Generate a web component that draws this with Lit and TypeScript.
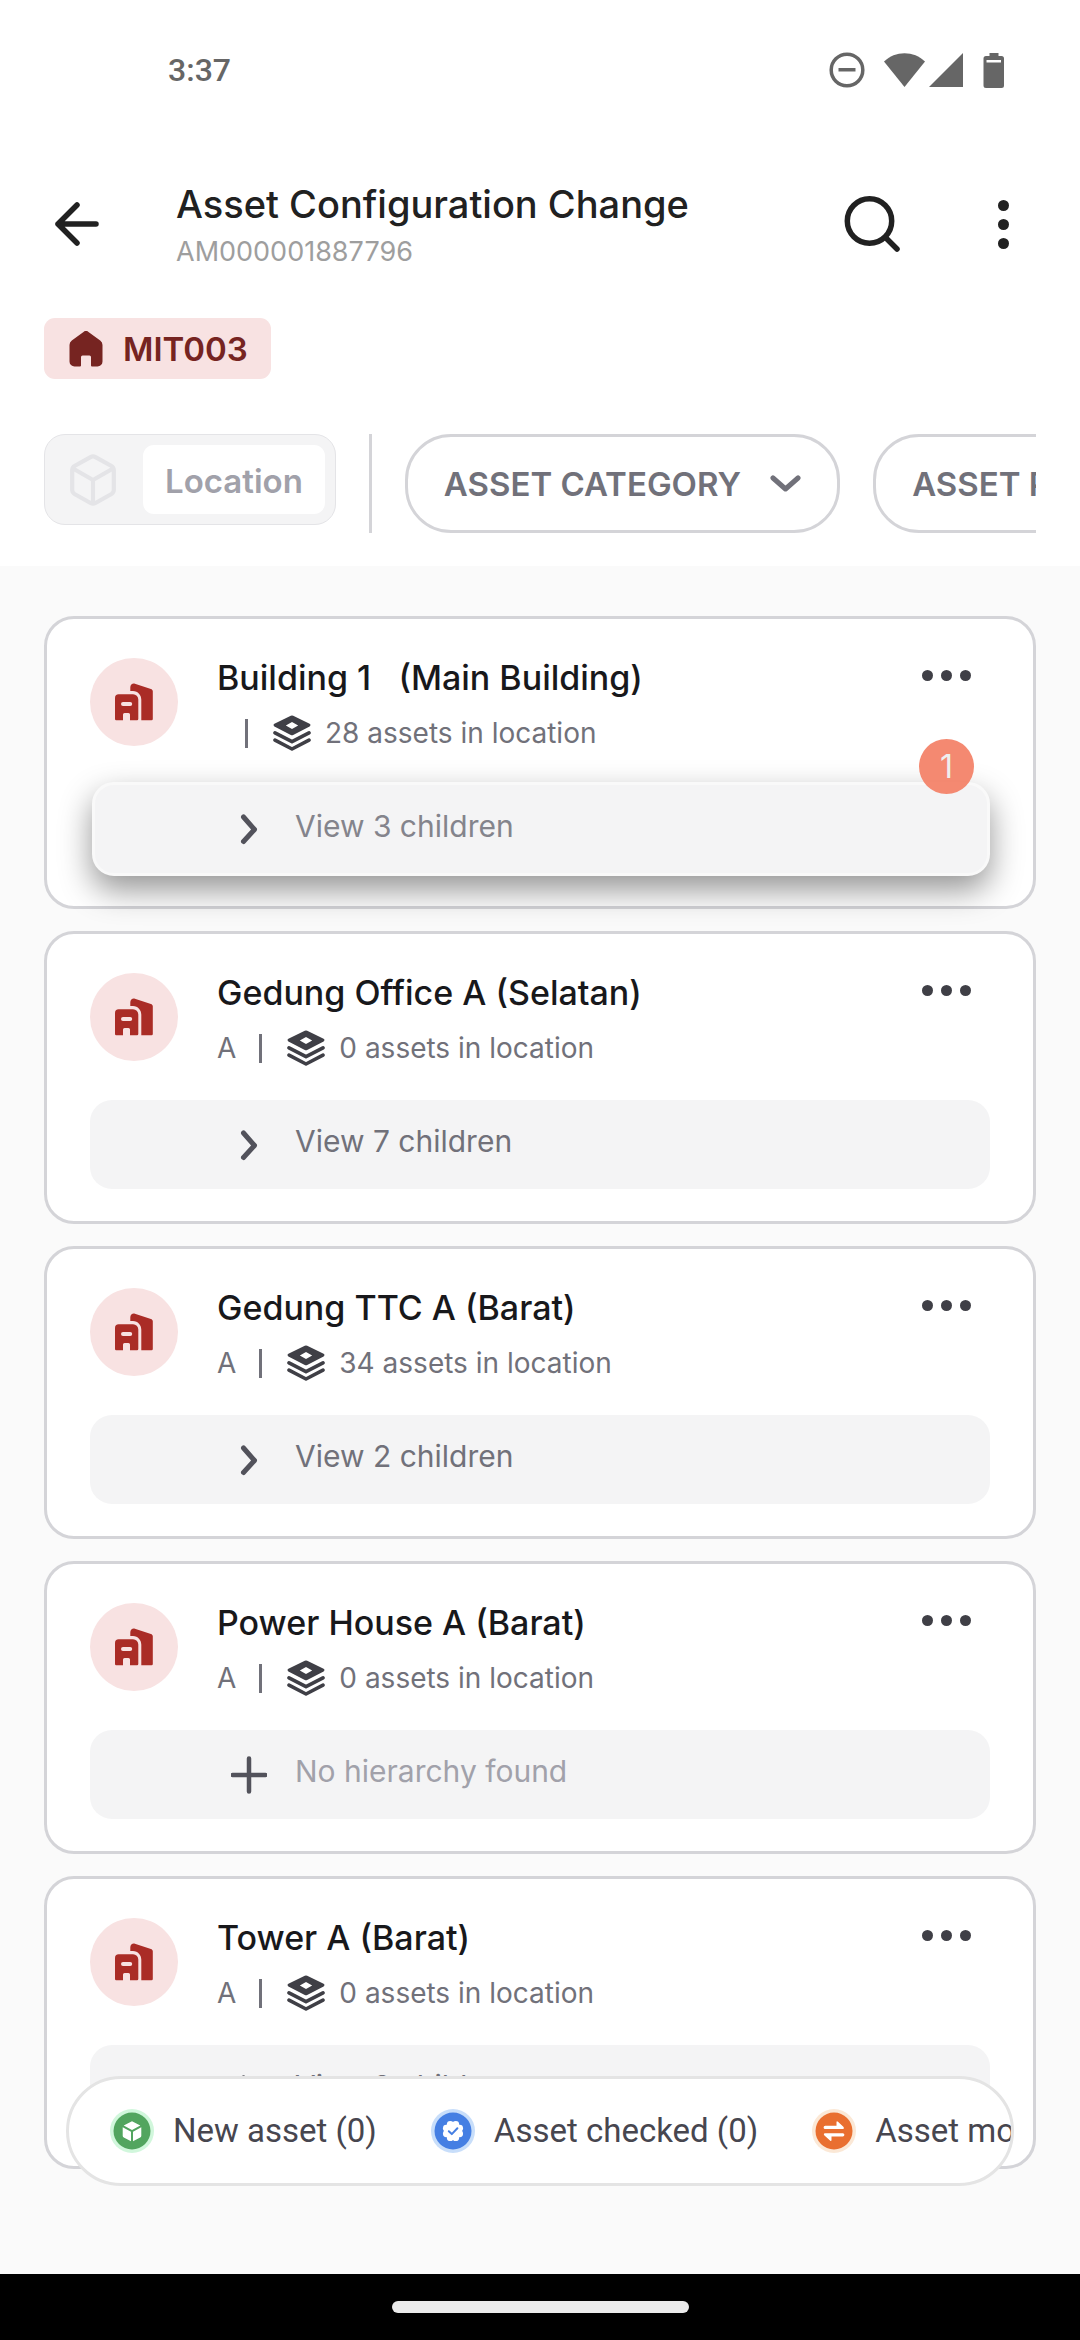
import { LitElement, html, css, svg, nothing } from "lit";
import { customElement, property } from "lit/decorators.js";
import { classMap } from "lit/directives/class-map.js";

interface AssetLocation {
  name: string;
  code: string;
  assets: number;
  children: number;
  step?: number;
}

const LOCATIONS: AssetLocation[] = [
  { name: "Building 1   (Main Building)", code: "", assets: 28, children: 3, step: 1 },
  { name: "Gedung Office A (Selatan)", code: "A", assets: 0, children: 7 },
  { name: "Gedung TTC A (Barat)", code: "A", assets: 34, children: 2 },
  { name: "Power House A (Barat)", code: "A", assets: 0, children: 0 },
  { name: "Tower A (Barat)", code: "A", assets: 0, children: 2 },
];

const chevronDown = html`<svg width="31" height="17" viewBox="0 0 31 17" fill="none" stroke="currentColor" stroke-width="5" stroke-linecap="round" stroke-linejoin="round" aria-hidden="true"><path d="M3 3 15.500 14 28 3" /></svg>`;

const chevronRight = html`<svg width="36" height="38" viewBox="0 0 36 38" fill="none" stroke="#52525b" stroke-width="5" stroke-linecap="round" stroke-linejoin="round" aria-hidden="true"><path d="M12.500 7 23.500 19.500 12.500 31.500" /></svg>`;

const plus = html`<svg width="36" height="38" viewBox="0 0 36 38" fill="none" stroke="#52525b" stroke-width="4.500" stroke-linecap="round" aria-hidden="true"><path d="M18 2.500v33M1.500 19h33" /></svg>`;

const layers = html`<svg width="38" height="36" viewBox="0 0 38 36" aria-hidden="true">
  <path fill="#3f3f46" fill-rule="evenodd" d="M17.800.8a2.500 2.500 0 0 1 2.400 0l16.400 7.900a1.500 1.500 0 0 1 0 2.700l-16.400 8.600a2.500 2.500 0 0 1-2.400 0L1.400 11.400a1.500 1.500 0 0 1 0-2.700zM19 7l-6.200 3.500L19 14l6.200-3.500z" />
  <path fill="none" stroke="#3f3f46" stroke-width="3.600" stroke-linecap="round" stroke-linejoin="round" d="M2 17.800l17 8.800 17-8.800M2 25.200l17 8.800 17-8.800" />
</svg>`;

const building = html`<svg width="42" height="42" viewBox="0 0 42 42" fill="#aa2c26" aria-hidden="true">
  <path fill-rule="evenodd" d="M2 17a3.700 3.700 0 0 1 3.700-3.700H20a5.300 5.300 0 0 1 5.300 5.300v19.400a1.300 1.300 0 0 1-1.300 1.300h-7V33.500a1.500 1.500 0 0 0-1.500-1.500h-4A1.500 1.500 0 0 0 10 33.500v5.800H3.300A1.300 1.300 0 0 1 2 38zM10 21a2 2 0 0 0 0 4h7.200a2 2 0 0 0 0-4z" />
  <path d="M17.300 10V6.500c0-2.700 2.300-4.500 4.600-3.700l16 5.100c1.100.4 1.900 1.200 1.900 2.300V38a1.300 1.300 0 0 1-1.300 1.300H28.300V18.800c0-5-3.300-8.500-8.300-8.800z" />
</svg>`;

@customElement("location-card")
export class LocationCard extends LitElement {
  @property({ attribute: false }) location!: AssetLocation;

  static styles = css`
    :host {
      display: block;
      isolation: isolate;
    }
    .card {
      box-sizing: border-box;
      padding: 39px 43px 32px;
      border: 3px solid #d4d4d8;
      border-radius: 30px;
      background: #fff;
    }
    .head {
      display: flex;
      align-items: flex-start;
      gap: 39px;
      margin-bottom: 34px;
    }
    .avatar {
      display: grid;
      place-items: center;
      width: 88px;
      height: 88px;
      border-radius: 50%;
      background: #f8e2e2;
    }
    .info {
      flex: 1;
      min-width: 0;
    }
    .name {
      margin: 0 0 17px;
      font-size: 34px;
      line-height: 40px;
      font-weight: 500;
      color: #18181b;
      white-space: pre;
    }
    .meta {
      display: flex;
      align-items: center;
      height: 36px;
      font-size: 28px;
      line-height: 36px;
      color: #71717a;
    }
    .code {
      min-width: 5px;
      margin-right: 23px;
    }
    .rule {
      width: 3px;
      height: 29px;
      margin-right: 25px;
      background: #71717a;
    }
    .count {
      margin-left: 14px;
    }
    button {
      border: 0;
      background: none;
      padding: 0;
      font: inherit;
      color: inherit;
      cursor: pointer;
    }
    .more {
      display: flex;
      gap: 8px;
      padding: 12px 19px;
    }
    .dot {
      width: 11px;
      height: 11px;
      border-radius: 50%;
      background: #3f3f46;
    }
    .footer {
      position: relative;
    }
    .children {
      box-sizing: border-box;
      display: flex;
      align-items: center;
      gap: 28px;
      width: 100%;
      height: 89px;
      padding-left: 141px;
      border-radius: 22px;
      background: #f4f4f5;
      font-size: 30px;
      line-height: 38px;
      color: #71717a;
    }
    .label {
      padding-bottom: 7px;
    }
    .empty .label {
      color: #a1a1aa;
    }
    .raised {
      width: calc(100% - 2px);
      height: 94px;
      margin: -3px 0 -2px 2px;
      padding-left: 136px;
      border: 3px solid #f9f9f9;
      box-shadow: 0 14px 32px rgba(0, 0, 0, 0.42);
      color: #84848c;
    }
    .badge {
      position: absolute;
      top: -43px;
      right: 16px;
      display: grid;
      place-items: center;
      width: 55px;
      height: 55px;
      border-radius: 50%;
      background: rgba(243, 130, 104, 0.94);
      color: #eee;
      font-size: 32px;
      line-height: 55px;
    }
  `;

  render() {
    const { name, code, assets, children, step } = this.location;
    const empty = children === 0;
    return html`
      <article class="card">
        <div class="head">
          <div class="avatar">${building}</div>
          <div class="info">
            <h2 class="name">${name}</h2>
            <div class="meta">
              <span class="code">${code}</span>
              <span class="rule"></span>
              ${layers}
              <span class="count">${assets} assets in location</span>
            </div>
          </div>
          <button class="more" aria-label="More actions">
            <span class="dot"></span><span class="dot"></span><span class="dot"></span>
          </button>
        </div>
        <div class="footer">
          <button class=${classMap({ children: true, empty, raised: step !== undefined })}>
            ${empty ? plus : chevronRight}
            <span class="label">${empty ? "No hierarchy found" : `View ${children} children`}</span>
          </button>
          ${step !== undefined ? html`<span class="badge">${step}</span>` : nothing}
        </div>
      </article>
    `;
  }
}

/* Eight-lobed seal used by the "checked" marker. */
const lobes = Array.from({ length: 8 }, (_, i) => {
  const a = (i * Math.PI) / 4 + Math.PI / 8;
  return svg`<circle cx=${22 + 7.2 * Math.cos(a)} cy=${22 + 7.2 * Math.sin(a)} r="3.400" fill="#fff" />`;
});

const newIcon = html`<svg width="44" height="44" viewBox="0 0 44 44" aria-hidden="true">
  <circle cx="22" cy="22" r="22" fill="#d1f7dc" />
  <circle cx="22" cy="22" r="18.500" fill="#52a55f" />
  <path fill="#fff" d="M22 12.200l8.300 4.300L22 21l-8.300-4.500zM12.700 18.300l8.300 4.500v9.500l-7.200-3.700a2 2 0 0 1-1.100-1.800zM31.300 18.300v8.500a2 2 0 0 1-1.100 1.800L23 32.300v-9.500z" />
</svg>`;

const checkedIcon = html`<svg width="44" height="44" viewBox="0 0 44 44" aria-hidden="true">
  <circle cx="22" cy="22" r="22" fill="#c8defa" />
  <circle cx="22" cy="22" r="18.500" fill="#457fe3" />
  ${lobes}
  <circle cx="22" cy="22" r="8.500" fill="#fff" />
  <path d="M17.800 22.300l3 2.800 5.600-5.800" fill="none" stroke="#457fe3" stroke-width="2" stroke-linecap="round" stroke-linejoin="round" />
</svg>`;

const movedIcon = html`<svg width="44" height="44" viewBox="0 0 44 44" aria-hidden="true">
  <circle cx="22" cy="22" r="22" fill="#fbe8d6" />
  <circle cx="22" cy="22" r="18.500" fill="#e96f30" />
  <path d="M13.200 16.800h11.300v-3.300q0-2 1.500-.7l5.600 5.200q1 2-.6 2H13.200a1.600 1.600 0 0 1 0-3.200zM30.800 24.200a1.600 1.600 0 0 1 0 3.200H19.500v3.300q0 2-1.500.7l-5.800-5.200q-1-2 .8-2z" fill="#fff" />
</svg>`;

@customElement("app-root")
export class AppRoot extends LitElement {
  static styles = css`
    :host {
      display: block;
      font-family: Inter, "Liberation Sans", sans-serif;
    }
    .screen {
      display: flex;
      flex-direction: column;
      min-height: 100vh;
      background: #fff;
    }
    button {
      border: 0;
      background: none;
      padding: 0;
      font: inherit;
      color: inherit;
      cursor: pointer;
    }
    svg {
      display: block;
      flex: none;
    }
    .status {
      display: flex;
      align-items: center;
      justify-content: space-between;
      height: 140px;
      padding: 0 76px 0 168px;
      font: 500 32px/40px Roboto, sans-serif;
      color: #666;
    }
    .appbar {
      display: flex;
      align-items: center;
      height: 168px;
      padding: 0 43px 0 53px;
      color: #212121;
    }
    .heading {
      flex: 1;
      margin-left: 75px;
    }
    .title {
      margin: 0 0 10px;
      font-size: 38px;
      line-height: 46px;
      font-weight: 500;
    }
    .number {
      margin: 0;
      font-size: 27px;
      line-height: 30px;
      color: #9e9e9e;
    }
    .actions {
      display: flex;
      align-items: center;
    }
    .menu {
      display: flex;
      flex-direction: column;
      gap: 8px;
      margin-left: 70px;
      padding: 8px 28px;
    }
    .menu-dot {
      width: 11px;
      height: 11px;
      border-radius: 50%;
      background: #212121;
    }
    .site {
      display: inline-flex;
      align-items: center;
      align-self: flex-start;
      gap: 20px;
      height: 61px;
      margin: 10px 44px 55px;
      padding: 0 23px 0 25px;
      border-radius: 11px;
      background: #f8e2e2;
      color: #762421;
      font-size: 33px;
      font-weight: 600;
    }
    .filters {
      display: flex;
      align-items: flex-start;
      gap: 33px;
      margin: 0 44px 33px;
      overflow: hidden;
      font-size: 33px;
      line-height: 40px;
      font-weight: 600;
    }
    .segment {
      box-sizing: border-box;
      display: flex;
      flex: none;
      align-items: center;
      height: 91px;
      padding: 10px 10px 10px 25px;
      border: 1px solid #e4e4e7;
      border-radius: 21px;
      background: #f4f4f5;
      gap: 27px;
    }
    .segment-on {
      height: 69px;
      padding: 3px 22px 0;
      border-radius: 11px;
      background: #fff;
      color: #a1a1aa;
    }
    .divider {
      flex: none;
      width: 3px;
      height: 99px;
      background: #d4d4d8;
    }
    .pill {
      box-sizing: border-box;
      display: flex;
      flex: none;
      align-items: center;
      gap: 29px;
      height: 99px;
      padding: 0 36px;
      border: 3px solid #d4d4d8;
      border-radius: 46px;
      color: #71717a;
      white-space: nowrap;
    }
    .body {
      position: relative;
      flex: 1;
      padding: 50px 44px 105px;
      background: #fafafa;
    }
    .list {
      display: flex;
      flex-direction: column;
      gap: 22px;
    }
    .summary {
      position: absolute;
      left: 66px;
      right: 66px;
      bottom: 88px;
      box-sizing: border-box;
      display: flex;
      align-items: center;
      gap: 54px;
      height: 110px;
      padding-left: 41px;
      border: 3px solid #e4e4e4;
      border-radius: 55px;
      background: #fff;
      overflow: hidden;
      font: 400 33px/40px Roboto, sans-serif;
      color: #47464f;
    }
    .stat {
      display: flex;
      flex: none;
      align-items: center;
      gap: 19px;
      white-space: nowrap;
    }
    .nav {
      display: grid;
      place-items: center;
      height: 66px;
      background: #000;
    }
    .handle {
      width: 297px;
      height: 12px;
      border-radius: 6px;
      background: #ebebeb;
    }
  `;

  render() {
    return html`
      <div class="screen">
        <div class="status">
          <span>3:37</span>
          <svg width="175" height="36" viewBox="0 0 175 36" fill="#666" aria-hidden="true">
            <circle cx="18" cy="18" r="15.800" fill="none" stroke="#666" stroke-width="3.500" />
            <path d="M9.500 16h17v3.500h-17z" />
            <path d="M55 9.500C66 -1.600 85 -1.600 96 9.500L75.500 35z" />
            <path d="M134 1v34H100z" />
            <path fill-rule="evenodd" d="M160.500 1h9v3h3a2.500 2.500 0 0 1 2.500 2.500v27a2.500 2.500 0 0 1-2.500 2.500h-15.500a2.500 2.500 0 0 1-2.500-2.500v-27A2.500 2.500 0 0 1 157 4h3.500zM157.500 8v2.500h14.500V8z" />
          </svg>
        </div>

        <header class="appbar">
          <button aria-label="Back">
            <svg width="48" height="48" viewBox="0 0 48 48" fill="none" stroke="currentColor" stroke-width="5.500" stroke-linecap="round" stroke-linejoin="round"><path d="M24 5 5 24l19 19M5 24h38" /></svg>
          </button>
          <div class="heading">
            <h1 class="title">Asset Configuration Change</h1>
            <p class="number">AM000001887796</p>
          </div>
          <div class="actions">
            <button aria-label="Search">
              <svg width="56" height="58" viewBox="0 0 56 58" fill="none" stroke="currentColor" stroke-width="5.500" stroke-linecap="round"><circle cx="25.500" cy="26" r="22.200" /><path d="M42 43l11 11" /></svg>
            </button>
            <button class="menu" aria-label="Menu">
              <span class="menu-dot"></span><span class="menu-dot"></span><span class="menu-dot"></span>
            </button>
          </div>
        </header>

        <div class="site">
          <svg width="34" height="36" viewBox="0 0 34 36" fill="currentColor" aria-hidden="true"><path d="M14.500.9a4 4 0 0 1 5 0l11.700 8.600A5.500 5.500 0 0 1 33.500 14v16.500a5 5 0 0 1-5 5H23a1 1 0 0 1-1-1V26a1.500 1.500 0 0 0-1.500-1.500h-7A1.500 1.500 0 0 0 12 26v8.500a1 1 0 0 1-1 1H5.500a5 5 0 0 1-5-5V14a5.500 5.500 0 0 1 2.300-4.500z" /></svg>
          <span>MIT003</span>
        </div>

        <div class="filters">
          <div class="segment">
            <button aria-label="Asset">
              <svg width="46" height="52" viewBox="0 0 46 52" fill="none" stroke="#e4e4e7" stroke-width="4.200" stroke-linejoin="round"><path d="M20.500 3.100a5 5 0 0 1 5 0L41.500 12a5 5 0 0 1 2.300 4v20a5 5 0 0 1-2.300 4L25.500 49a5 5 0 0 1-5 0L4.500 40a5 5 0 0 1-2.300-4V16a5 5 0 0 1 2.300-4zM3 14.500 23 26 43 14.500M23 26v23" /></svg>
            </button>
            <button class="segment-on">Location</button>
          </div>
          <span class="divider"></span>
          <button class="pill">ASSET CATEGORY ${chevronDown}</button>
          <button class="pill">ASSET P ${chevronDown}</button>
        </div>

        <main class="body">
          <div class="list">
            ${LOCATIONS.map((l) => html`<location-card .location=${l}></location-card>`)}
          </div>
          <div class="summary">
            <span class="stat">${newIcon}<span>New asset (0)</span></span>
            <span class="stat">${checkedIcon}<span>Asset checked (0)</span></span>
            <span class="stat">${movedIcon}<span>Asset moved (0)</span></span>
          </div>
        </main>

        <footer class="nav"><span class="handle"></span></footer>
      </div>
    `;
  }
}
